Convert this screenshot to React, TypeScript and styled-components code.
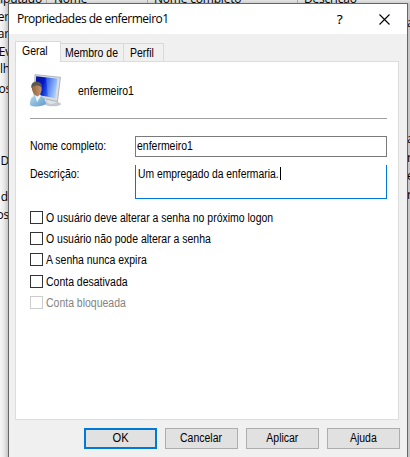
import React from "react";
import styled, { createGlobalStyle } from "styled-components";

const GlobalStyle = createGlobalStyle`
  *, *::before { box-sizing: border-box; }
  body { margin: 0; overflow: hidden; }
`;

const Desktop = styled.div`
  position: relative;
  width: 410px;
  height: 457px;
  overflow: hidden;
  background: linear-gradient(90deg, #f7f7f7 0, #e9e9e9 4px, #c6c6c6 8px, #c6c6c6 100%);
  font-family: "Liberation Sans", Arial, sans-serif;
  font-size: 12px;
  color: #000;
`;

const BackdropHeader = styled.div`
  position: absolute;
  inset: 0 0 auto 0;
  height: 4px;
  background: linear-gradient(#e4e4e4, #c9c9c9);
  overflow: hidden;
`;

const BackdropText = styled.span<{ $x: number; $y: number; $end?: boolean }>`
  position: absolute;
  left: ${(p) => p.$x}px;
  top: ${(p) => p.$y}px;
  transform: ${(p) => (p.$end ? "translateX(-100%)" : "none")};
  font: 12px/16px "Open Sans", "Noto Sans", sans-serif;
  letter-spacing: -0.2px;
  white-space: nowrap;
`;

const ColumnLine = styled.span<{ $x: number }>`
  position: absolute;
  left: ${(p) => p.$x}px;
  top: 0;
  width: 1px;
  height: 4px;
  background: #aaa;
`;

const Dialog = styled.section`
  position: relative;
  display: flex;
  flex-direction: column;
  width: 400px;
  height: 457px;
  margin-left: 8px;
  padding-top: 3px;
`;

const Frame = styled.div`
  display: flex;
  flex-direction: column;
  flex: 1;
  border: 1px solid #666;
  border-bottom: 0;
  background: #f0f0f0;
`;

const TitleBar = styled.header`
  display: flex;
  align-items: center;
  height: 30px;
  padding: 0 17px 0 8px;
  background: #fff;
`;

const Title = styled.h1`
  flex: 1;
  margin: 0;
  font: 400 12px/16px "Open Sans", "Noto Sans", sans-serif;
  letter-spacing: -0.5px;
`;

const Help = styled.span`
  width: 7px;
  margin-right: 35px;
  font: 13px/16px "Open Sans", sans-serif;
  -webkit-text-stroke: 0.2px #000;
`;

const TabStrip = styled.nav`
  display: flex;
  align-items: flex-end;
  height: 27px;
  padding-left: 6px;
`;

const Tab = styled.div<{ $width: number; $active?: boolean; $inset: number }>`
  position: relative;
  z-index: ${(p) => (p.$active ? 1 : 0)};
  width: ${(p) => p.$width}px;
  height: ${(p) => (p.$active ? 21 : 18)}px;
  margin-bottom: ${(p) => (p.$active ? -1 : 0)}px;
  margin-right: -1px;
  padding: 3px 0 0 ${(p) => p.$inset}px;
  border: 1px solid #d9d9d9;
  border-bottom: 0;
  background: ${(p) => (p.$active ? "#fff" : "#f0f0f0")};
  line-height: 13px;
  white-space: nowrap;
`;

const Panel = styled.main`
  width: 384px;
  height: 359px;
  margin-left: 6px;
  padding: 11px 11px 0 14px;
  border: 1px solid #dcdcdc;
  background: #fff;
`;

/* Condensed dialog lettering */
const Copy = styled.span<{ $stretch?: number; $centered?: boolean }>`
  display: inline-block;
  transform: scaleX(${(p) => p.$stretch ?? 0.873});
  transform-origin: ${(p) => (p.$centered ? "center" : "left")};
  white-space: nowrap;
`;

const Identity = styled.div`
  display: flex;
  align-items: center;
  gap: 16px;
  width: 357px;
  height: 46px;
  border-bottom: 1px solid #a0a0a0;
  padding-bottom: 10px;
`;

const Field = styled.label<{ $top: number }>`
  display: grid;
  grid-template-columns: 105px 252px;
  margin-top: ${(p) => p.$top}px;
`;

const FieldName = styled.span<{ $top: number }>`
  padding-top: ${(p) => p.$top}px;
  line-height: 14px;
`;

const Entry = styled.div`
  height: 21px;
  padding: 3px 0 0 1px;
  border: 1px solid #7a7a7a;
  line-height: 13px;
`;

const FocusedEntry = styled.div`
  display: flex;
  height: 34px;
  padding: 2px 0 0 2px;
  border: 1px solid #0078d7;
  border-top: 0;
  line-height: 14px;
`;

const TypedText = styled.span`
  width: 142px;
`;

const Caret = styled.i`
  width: 1px;
  height: 13px;
  background: #000;
`;

const Options = styled.div`
  display: grid;
  grid-template-rows: 21px 21px 22px 21px 21px;
  margin-top: 12px;
`;

const Option = styled.label<{ $disabled?: boolean }>`
  display: flex;
  gap: 3px;
  height: 13px;
  line-height: 14px;
  color: ${(p) => (p.$disabled ? "#838383" : "#000")};

  &::before {
    content: "";
    width: 13px;
    height: 13px;
    border: 1px solid ${(p) => (p.$disabled ? "#ccc" : "#333")};
    background: #fff;
  }
`;

const Actions = styled.footer`
  display: flex;
  justify-content: flex-end;
  gap: 8px;
  padding: 8px 7px 0 0;
`;

const Button = styled.button<{ $primary?: boolean }>`
  width: 73px;
  height: 21px;
  padding: 0;
  border: ${(p) => (p.$primary ? "2px solid #0078d7" : "1px solid #adadad")};
  background: #e1e1e1;
  color: #000;
  font: 12px/13px "Liberation Sans", Arial, sans-serif;
`;

const UserIcon = () => (
  <svg width="32" height="34" viewBox="0 0 32 34">
    <defs>
      <linearGradient id="screen" x1="0" x2="1" y1="0" y2=".25">
        <stop offset="0" stopColor="#0a1590" />
        <stop offset=".4" stopColor="#0414c8" />
        <stop offset=".6" stopColor="#1a48e0" />
        <stop offset="1" stopColor="#8fbcff" />
      </linearGradient>
      <linearGradient id="shirt" x2="1" y2="1">
        <stop stopColor="#b6d9f0" />
        <stop offset="1" stopColor="#5d9bc7" />
      </linearGradient>
      <linearGradient id="face">
        <stop stopColor="#8f633f" />
        <stop offset="1" stopColor="#c7986c" />
      </linearGradient>
    </defs>
    <ellipse cx="23" cy="30" rx="8" ry="2.3" fill="#c7cacc" />
    <path d="M17 25l8-1 3 5-8 2-4-3z" fill="#dfe2e4" stroke="#b3b8bc" strokeWidth=".6" />
    <path d="M5 .6L30.500 3.300 27.500 27.500 4 22.500z" fill="#d9dce0" stroke="#9ba1a9" strokeWidth=".7" />
    <path d="M6.2 2.300L27.500 4.700 25 24 5 20.500z" fill="url(#screen)" />
    <path d="M16 3.500l2 19 7 1.400L27.500 4.800z" fill="#d4e8ff" opacity=".25" />
    <path d="M0 31c-.2-5 1-8 5-9.500h5c4 1.500 6 4.500 6 8.500-3 2.500-12 3.700-16 1z" fill="url(#shirt)" />
    <path d="M5 21l2 7 4-6-1-2z" fill="#f0f7fb" />
    <path d="M1.800 13c0-6 9-7 9.700 0 .5 4-.5 7.500-4 9.500C3.700 21 1.800 17 1.800 13z" fill="url(#face)" />
    <path d="M1.300 14C.8 8.500 4.500 6.800 8 8c3.500.5 4.500 3.500 3.600 5.500C9.500 11 6 11 3.500 12z" fill="#5a5853" />
  </svg>
);

const CloseIcon = () => (
  <svg width="11" height="11" viewBox="0 0 11 11">
    <path d="M.5.5l10 10M10.500.5l-10 10" stroke="#000" strokeWidth="1.100" />
  </svg>
);

const leftFragments = [
  { text: "omputado", x: 42, y: -9 },
  { text: "er", x: 9, y: 9 },
  { text: "Tar", x: 9, y: 26 },
  { text: "Ev", x: 11, y: 44 },
  { text: "ilh", x: 10, y: 61 },
  { text: "os", x: 11, y: 81 },
  { text: "D", x: 9, y: 153 },
  { text: "d", x: 8, y: 189 },
  { text: "os", x: 9, y: 207 },
];

const rightFragments = [
  { text: "a", y: 15 },
  { text: "a", y: 131 },
  { text: "n", y: 150 },
  { text: "e", y: 168 },
  { text: "n", y: 187 },
];

const options = [
  { label: "O usuário deve alterar a senha no próximo logon" },
  { label: "O usuário não pode alterar a senha" },
  { label: "A senha nunca expira" },
  { label: "Conta desativada" },
  { label: "Conta bloqueada", disabled: true },
];

export default function App() {
  return (
    <>
      <GlobalStyle />
      <Desktop>
        <BackdropHeader>
          <BackdropText $x={54} $y={-9}>Nome</BackdropText>
          <BackdropText $x={154} $y={-9}>Nome completo</BackdropText>
          <BackdropText $x={304} $y={-9}>Descrição</BackdropText>
          <ColumnLine $x={46} />
          <ColumnLine $x={147} />
          <ColumnLine $x={297} />
        </BackdropHeader>
        {leftFragments.map((f) => (
          <BackdropText key={f.y} $x={f.x} $y={f.y} $end>{f.text}</BackdropText>
        ))}
        {rightFragments.map((f) => (
          <BackdropText key={f.y} $x={407} $y={f.y}>{f.text}</BackdropText>
        ))}
        <Dialog>
          <Frame>
            <TitleBar>
              <Title>Propriedades de enfermeiro1</Title>
              <Help>?</Help>
              <CloseIcon />
            </TitleBar>
            <TabStrip>
              <Tab $width={46} $inset={6} $active><Copy>Geral</Copy></Tab>
              <Tab $width={64} $inset={4}><Copy>Membro de</Copy></Tab>
              <Tab $width={41} $inset={6}><Copy>Perfil</Copy></Tab>
            </TabStrip>
            <Panel>
              <Identity>
                <UserIcon />
                <Copy>enfermeiro1</Copy>
              </Identity>
              <Field $top={17}>
                <FieldName $top={3}><Copy>Nome completo:</Copy></FieldName>
                <Entry><Copy>enfermeiro1</Copy></Entry>
              </Field>
              <Field $top={8}>
                <FieldName $top={2}><Copy>Descrição:</Copy></FieldName>
                <FocusedEntry>
                  <TypedText>
                    <Copy $stretch={0.86}>Um empregado da enfermaria.</Copy>
                  </TypedText>
                  <Caret />
                </FocusedEntry>
              </Field>
              <Options>
                {options.map((o) => (
                  <Option key={o.label} $disabled={o.disabled}>
                    <Copy>{o.label}</Copy>
                  </Option>
                ))}
              </Options>
            </Panel>
            <Actions>
              <Button $primary><Copy $centered $stretch={0.93}>OK</Copy></Button>
              <Button><Copy $centered>Cancelar</Copy></Button>
              <Button><Copy $centered>Aplicar</Copy></Button>
              <Button><Copy $centered>Ajuda</Copy></Button>
            </Actions>
          </Frame>
        </Dialog>
      </Desktop>
    </>
  );
}
